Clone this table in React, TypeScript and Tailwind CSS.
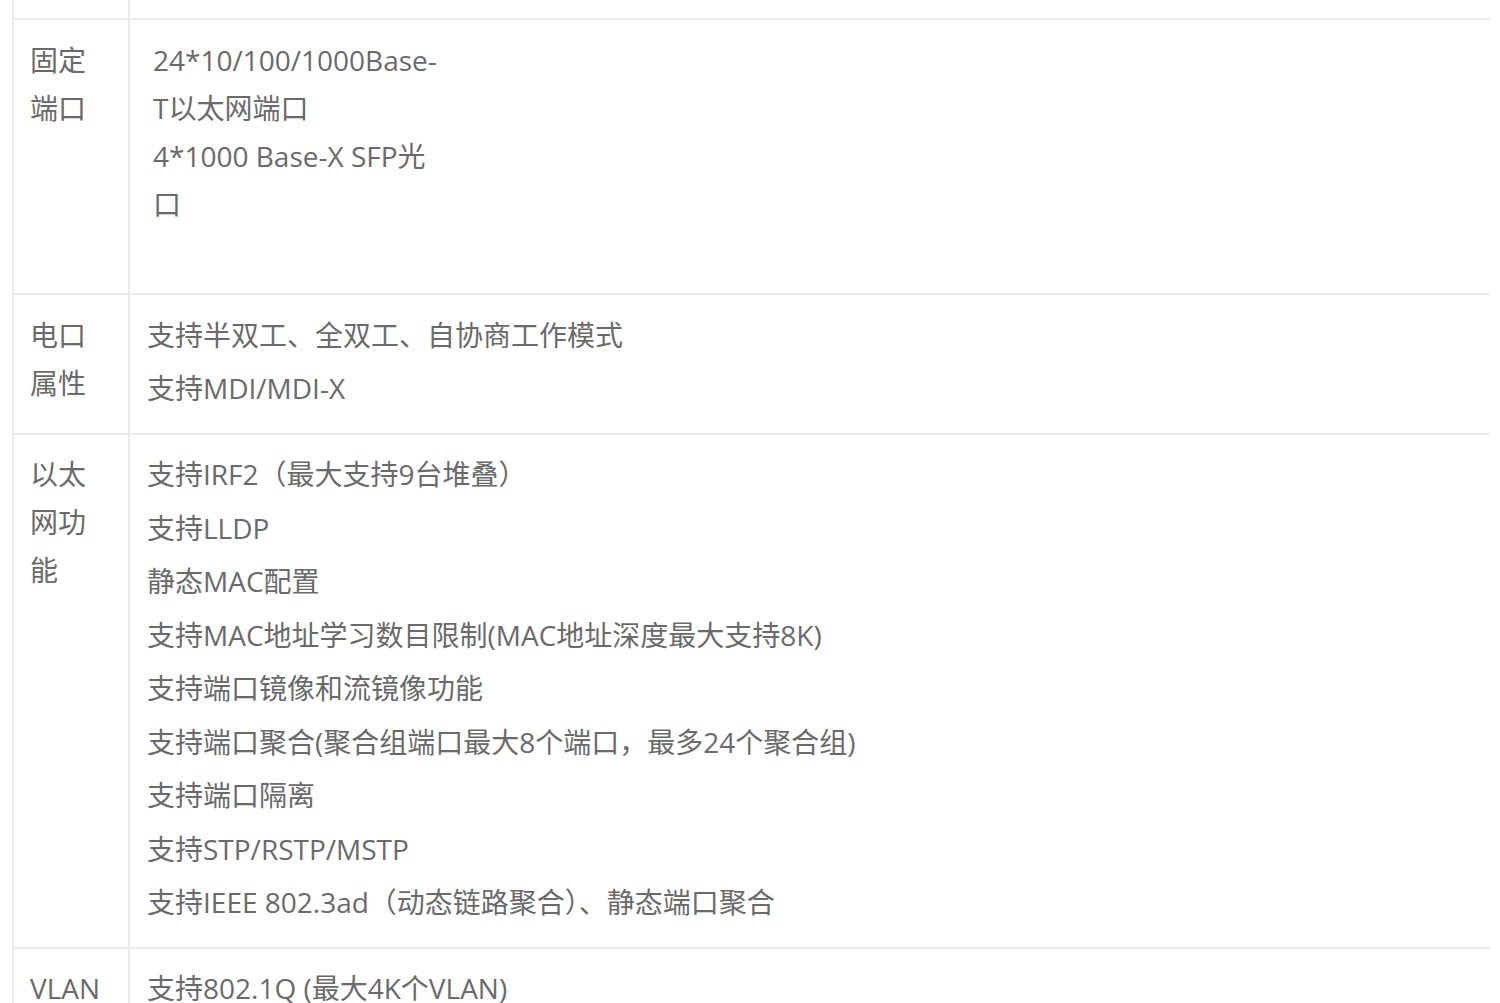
import React from "react";

const font = {
  fontFamily: '"Open Sans", "Noto Sans CJK SC", sans-serif',
};

function Row({
  label,
  children,
  className = "",
}: {
  label: React.ReactNode;
  children: React.ReactNode;
  className?: string;
}) {
  return (
    <div className={`flex border-b-2 border-[#ebebeb] ${className}`}>
      <div className="w-[116px] shrink-0 border-r-2 border-[#ebebeb] pl-[16px] leading-[48px]">
        {label}
      </div>
      <div className="flex-1">{children}</div>
    </div>
  );
}

export default function App() {
  const eth = [
    "支持IRF2（最大支持9台堆叠）",
    "支持LLDP",
    "静态MAC配置",
    "支持MAC地址学习数目限制(MAC地址深度最大支持8K)",
    "支持端口镜像和流镜像功能",
    "支持端口聚合(聚合组端口最大8个端口，最多24个聚合组)",
    "支持端口隔离",
    "支持STP/RSTP/MSTP",
    "支持IEEE 802.3ad（动态链路聚合）、静态端口聚合",
  ];
  return (
    <div
      className="w-[1500px] h-[1003px] overflow-hidden bg-white text-[28px] text-[#6a6a6a]"
      style={font}
    >
      <div className="ml-[12px] w-[1478px] border-l-2 border-[#ebebeb]">
        <Row label="" className="h-[20px]">
          <div />
        </Row>
        <Row label={<div className="pt-[16px]">固定<br />端口</div>} className="h-[275px]">
          <div className="pl-[23px] pt-[16px] leading-[48px]">
            <div>24*10/100/1000Base-</div>
            <div>T以太网端口</div>
            <div>4*1000 Base-X SFP光</div>
            <div>口</div>
          </div>
        </Row>
        <Row label={<div className="pt-[16px]">电口<br />属性</div>} className="h-[140px]">
          <div className="pl-[17px] pt-[16px] leading-[48px] flex flex-col gap-[5px]">
            <div>支持半双工、全双工、自协商工作模式</div>
            <div>支持MDI/MDI-X</div>
          </div>
        </Row>
        <Row
          label={<div className="pt-[15px]">以太<br />网功<br />能</div>}
          className="h-[514px]"
        >
          <div className="pl-[17px] pt-[15px] leading-[48px] flex flex-col gap-[5.5px]">
            {eth.map((t) => (
              <div key={t}>{t}</div>
            ))}
          </div>
        </Row>
        <Row label={<div className="pt-[15px]">VLAN</div>} className="h-[120px]">
          <div className="pl-[17px] pt-[15px] leading-[48px]">
            <div>支持802.1Q (最大4K个VLAN)</div>
          </div>
        </Row>
      </div>
    </div>
  );
}
